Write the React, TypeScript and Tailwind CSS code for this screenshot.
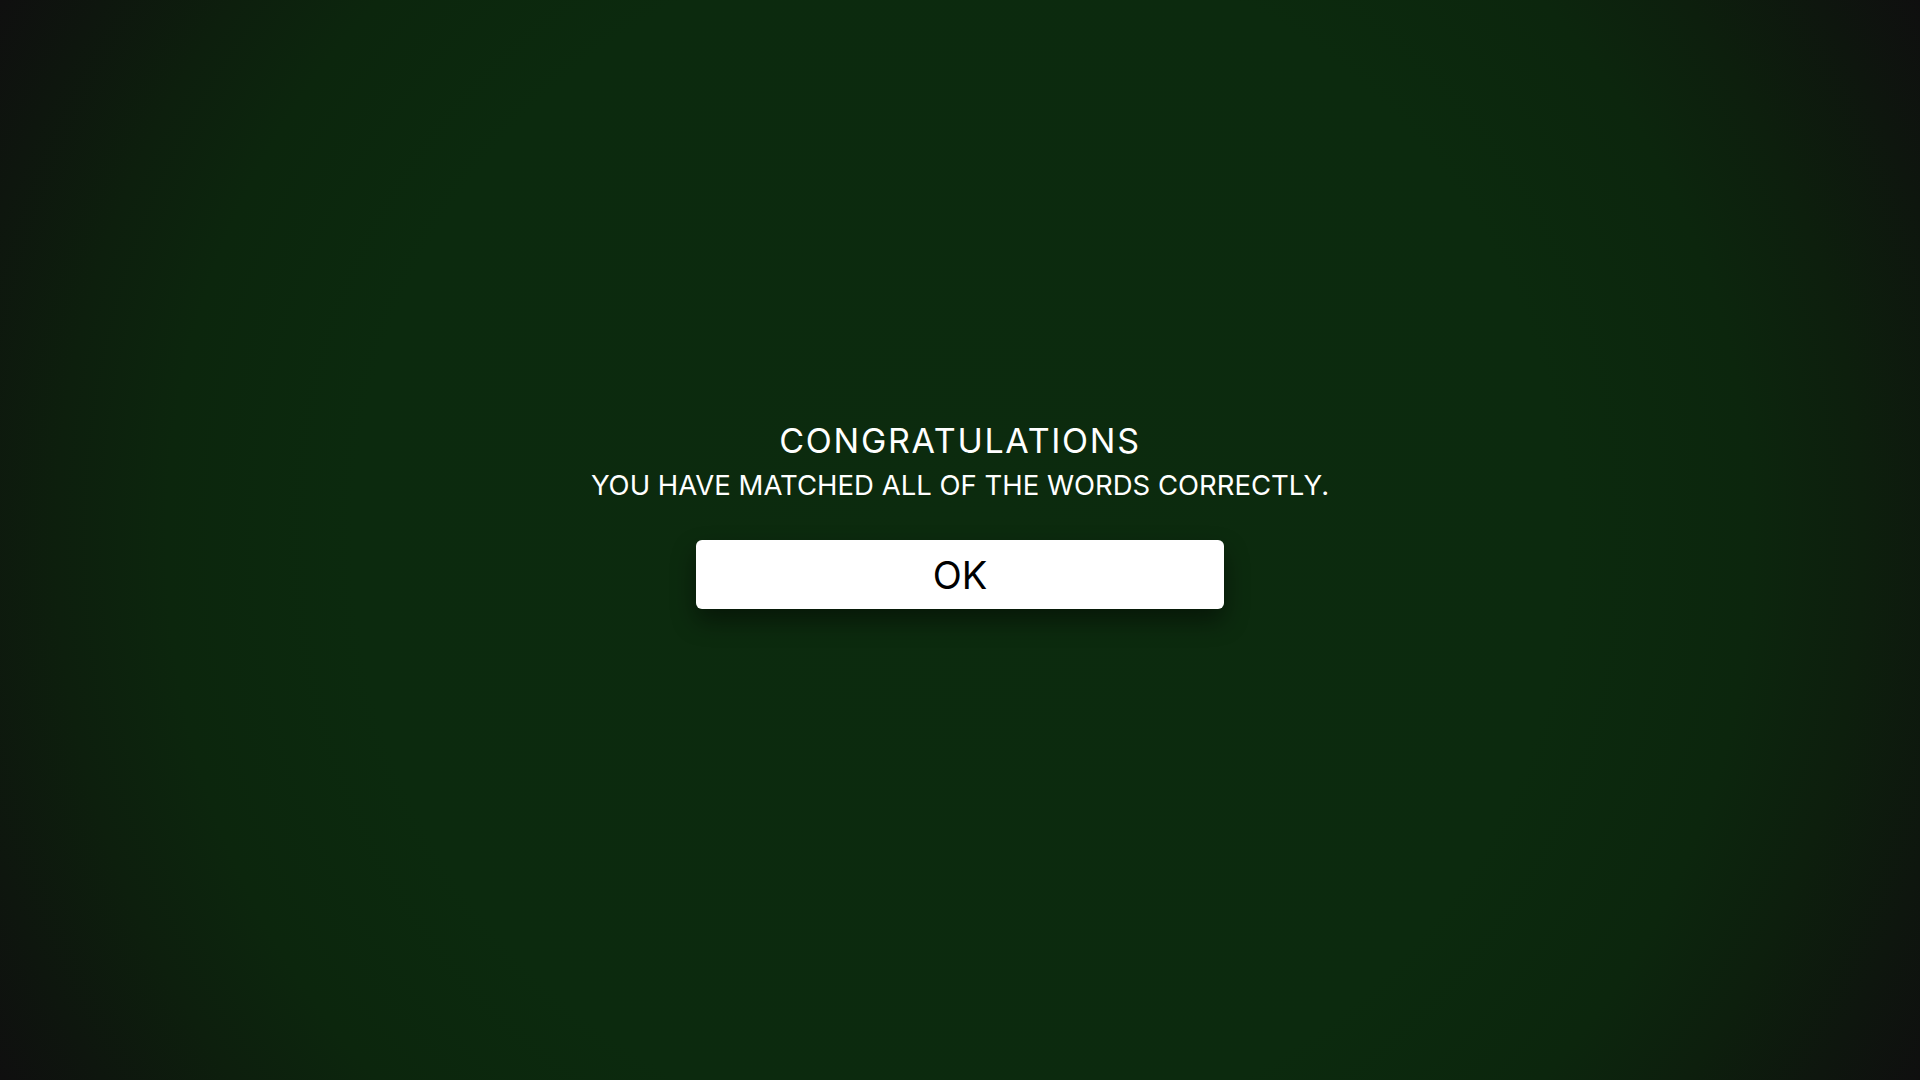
import React from "react";

export default function App() {
  return (
    <div
      className="w-[1920px] h-[1080px] overflow-hidden flex flex-col items-center justify-center pb-[50px] bg-[radial-gradient(circle_farthest-corner_at_center,#0c2b0e_0%,#0c2a0e_55%,#0c260d_72%,#0d1f0d_82%,#0e160e_92%,#0f0f0f_100%)]"
      style={{ fontFamily: "Inter, 'Noto Sans', 'Liberation Sans', sans-serif" }}
    >
      <h1 className="text-white text-[34px] leading-[40px] font-normal tracking-[1.7px]">
        CONGRATULATIONS
      </h1>
      <p className="mt-[7px] text-white text-[27.5px] leading-[34px] font-normal">
        YOU HAVE MATCHED ALL OF THE WORDS CORRECTLY.
      </p>
      <button className="mt-[38px] w-[528px] h-[69px] bg-white rounded-[6px] text-black text-[38px] leading-none flex items-center justify-center shadow-[0_12px_24px_rgba(0,0,0,0.45)]">
        OK
      </button>
    </div>
  );
}
